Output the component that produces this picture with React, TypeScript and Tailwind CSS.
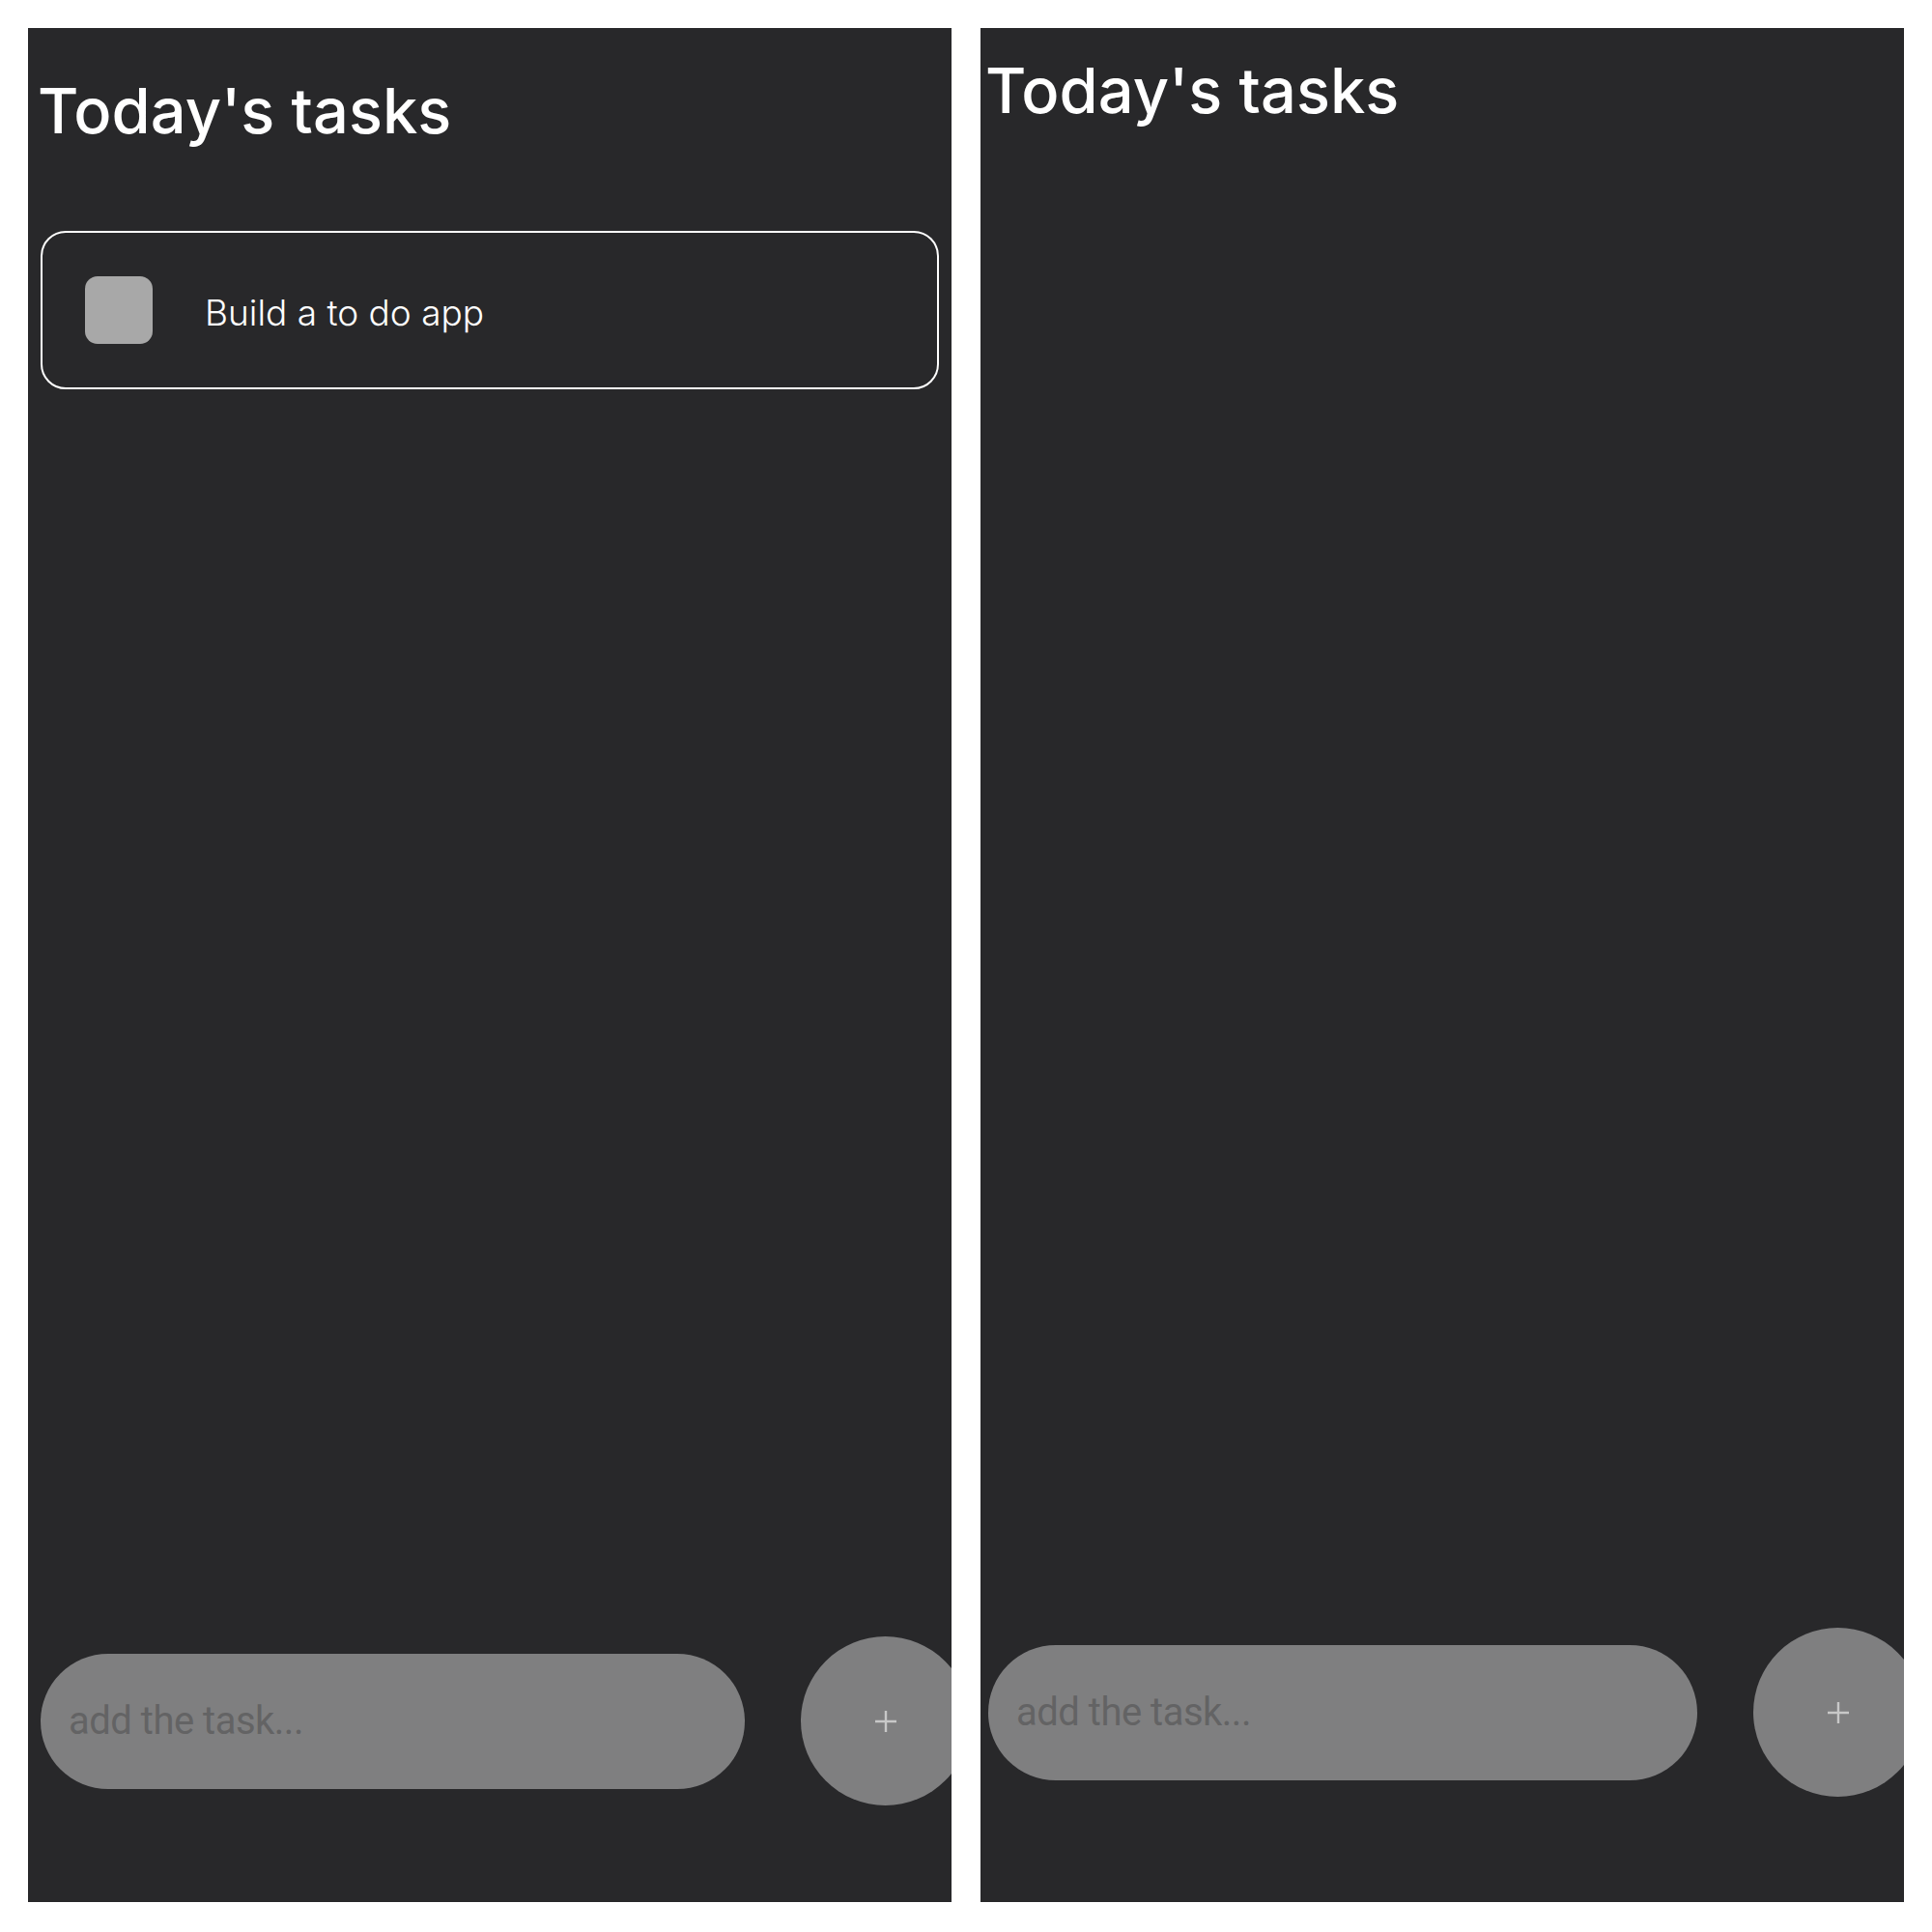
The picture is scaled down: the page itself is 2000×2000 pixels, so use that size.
import React, { useState } from 'react';

type Task = { id: number; text: string; done: boolean };

function PlusIcon() {
  return (
    <svg width="24" height="24" viewBox="0 0 24 24" fill="none">
      <path d="M12 1v22M1 12h22" stroke="#c8c8c8" strokeWidth="2.4" />
    </svg>
  );
}

function AddBar({
  value,
  onChange,
  onAdd,
  inputWidth,
}: {
  value: string;
  onChange: (v: string) => void;
  onAdd: () => void;
  inputWidth: string;
}) {
  return (
    <div className="flex items-center gap-[58px]">
      <input
        value={value}
        onChange={(e) => onChange(e.target.value)}
        placeholder="add the task..."
        className={`${inputWidth} h-[140px] shrink-0 rounded-full bg-[#7f7f80] pl-[29px] text-[40px] tracking-[-0.5px] text-[#5f5f60] placeholder-[#636364] outline-none font-['Roboto',sans-serif]`}
      />
      <button
        onClick={onAdd}
        className="w-[175px] h-[175px] shrink-0 rounded-full bg-[#7f7f80] flex items-center justify-center"
      >
        <PlusIcon />
      </button>
    </div>
  );
}

function TaskCard({ task }: { task: Task }) {
  return (
    <div className="h-[164px] rounded-[26px] border-2 border-white flex items-center pl-[44px]">
      <div className="w-[70px] h-[70px] rounded-[13px] bg-[#a8a8a8]" />
      <span className="ml-[54px] mt-[6px] text-[37px] font-light text-white">{task.text}</span>
    </div>
  );
}

export default function App() {
  const [tasks] = useState<Task[]>([{ id: 1, text: 'Build a to do app', done: false }]);
  const [draftA, setDraftA] = useState('');
  const [draftB, setDraftB] = useState('');

  return (
    <div className="min-h-screen bg-white flex gap-[30px] p-[29px] font-['Inter',sans-serif]">
      {/* screen with one task */}
      <div className="w-[956px] h-[1940px] bg-[#28282a] overflow-hidden flex flex-col px-[13px]">
        <h1 className="pt-[53px] -ml-[3px] text-[65px] font-medium leading-none text-white">Today's tasks</h1>
        <div className="mt-[92px] flex flex-col gap-4">
          {tasks.map((t) => (
            <TaskCard key={t.id} task={t} />
          ))}
        </div>
        <div className="mt-auto pb-[100px]">
          <AddBar value={draftA} onChange={setDraftA} onAdd={() => {}} inputWidth="w-[729px]" />
        </div>
      </div>

      {/* empty screen */}
      <div className="w-[956px] h-[1940px] bg-[#28282a] overflow-hidden flex flex-col px-[8px]">
        <h1 className="pt-[32px] -ml-[3px] text-[65px] font-medium leading-none text-white">Today's tasks</h1>
        <div className="mt-auto pb-[109px]">
          <AddBar value={draftB} onChange={setDraftB} onAdd={() => {}} inputWidth="w-[734px]" />
        </div>
      </div>
    </div>
  );
}
